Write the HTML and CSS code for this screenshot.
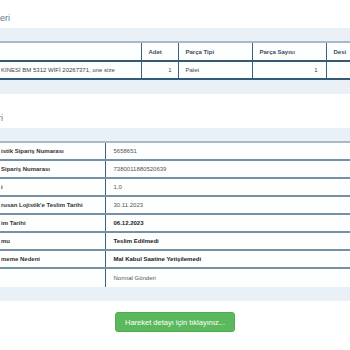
FILE: index.html
```html
<!DOCTYPE html>
<html lang="tr">
<head>
    <meta charset="UTF-8">
    <meta name="viewport" content="width=device-width, initial-scale=1.0">
    <title>Gönderi Detayı</title>
    <link rel="stylesheet" href="styles.css">
</head>
<body>
    <div class="page">
        <!-- Ürün bilgileri -->
        <div class="block first">
            <h3 class="block-title"><span>Ürün Bilgileri</span></h3>
            <div class="strip"></div>
            <table class="grid products">
                <colgroup>
                    <col style="width:141px">
                    <col style="width:37px">
                    <col style="width:74px">
                    <col style="width:74px">
                    <col style="width:44px">
                </colgroup>
                <thead>
                    <tr>
                        <th class="first-col"></th>
                        <th>Adet</th>
                        <th>Parça Tipi</th>
                        <th>Parça Sayısı</th>
                        <th>Desi</th>
                    </tr>
                </thead>
                <tbody>
                    <tr>
                        <td class="first-col">KİNESİ BM 5312 WİFİ 20267371, one size</td>
                        <td class="num">1</td>
                        <td>Palet</td>
                        <td class="num wide">1</td>
                        <td></td>
                    </tr>
                </tbody>
            </table>
            <div class="strip bottom"></div>
        </div>

        <!-- Gönderi bilgileri -->
        <div class="block second">
            <h3 class="block-title short"><span>Gönderi Bilgileri</span></h3>
            <div class="strip"></div>
            <table class="grid details">
                <colgroup>
                    <col style="width:105px">
                    <col>
                </colgroup>
                <tbody>
                    <tr><th class="first-col">istik Sipariş Numarası</th><td>5658651</td></tr>
                    <tr><th class="first-col">Sipariş Numarası</th><td>7380011880520639</td></tr>
                    <tr><th class="first-col">i</th><td>1,0</td></tr>
                    <tr><th class="first-col">rusan Lojistik'e Teslim Tarihi</th><td>30.11.2023</td></tr>
                    <tr><th class="first-col">im Tarihi</th><td class="strong">06.12.2023</td></tr>
                    <tr><th class="first-col">mu</th><td class="strong">Teslim Edilmedi</td></tr>
                    <tr><th class="first-col">meme Nedeni</th><td class="strong">Mal Kabul Saatine Yetişilemedi</td></tr>
                    <tr class="last"><th class="first-col"></th><td>Normal Gönderi</td></tr>
                </tbody>
            </table>
            <div class="strip bottom"></div>
        </div>

        <div class="actions">
            <button class="btn-green">Hareket detayı için tıklayınız...</button>
        </div>
    </div>
</body>
</html>
```

FILE: styles.css
```css
/* Base */
body {
    margin: 0;
    padding: 0;
    background: #ffffff;
    font-family: "Liberation Sans", Arial, sans-serif;
    font-size: 6px;
    color: #444;
    overflow: hidden;
}

.page {
    width: 350px;
    overflow: hidden;
}

/* Section blocks */
.block.first {
    padding-top: 12px;
}

.block.second {
    margin-top: 18px;
}

.block-title {
    margin: 0 0 4px -200px;
    width: 210px;
    height: 12px;
    line-height: 12px;
    font-size: 9px;
    font-weight: normal;
    color: #5a7892;
    text-align: right;
    white-space: nowrap;
}

.block-title.short {
    width: 203px;
}

.strip {
    height: 13px;
    background: #e9f0f6;
}

.strip.bottom {
    height: 14px;
}

/* Tables */
.grid {
    border-collapse: collapse;
    table-layout: fixed;
    background: #fdfefe;
    border-top: 2px solid #a8b8c4;
}

.grid th,
.grid td {
    padding: 0 7px;
    text-align: left;
    white-space: nowrap;
    overflow: hidden;
    border-bottom: 2px solid #7890a3;
}

.products {
    width: 370px;
}

.products th,
.products td {
    border-left: 1px solid #3f6180;
}

.products th {
    height: 17px;
    font-weight: bold;
    color: #3b4d5e;
    border-bottom: 2px solid #355a78;
}

.products td {
    height: 16px;
    color: #444;
    border-bottom: 2px solid #355a78;
}

.products .first-col {
    border-left: none;
    padding-left: 1px;
}

.products .num {
    text-align: right;
    padding-right: 6px;
}

.products .num.wide {
    padding-right: 8px;
}

.details {
    width: 360px;
}

.details th,
.details td {
    height: 16px;
}

.details th {
    font-weight: bold;
    color: #333;
    border-right: 1px solid #3f6180;
}

.details .first-col {
    padding-left: 1px;
}

.details td {
    padding-left: 8px;
    color: #555;
}

.details td.strong {
    font-weight: bold;
    color: #222;
}

.details tr.last th,
.details tr.last td {
    height: 18px;
    border-bottom: none;
}

/* Button */
.actions {
    padding-top: 11px;
    text-align: center;
}

.btn-green {
    width: 120px;
    height: 20px;
    padding: 0;
    background: #5cb85c;
    border: 1px solid #4cae4c;
    border-radius: 3px;
    color: #ffffff;
    font-family: "Liberation Sans", Arial, sans-serif;
    font-size: 7.5px;
    white-space: nowrap;
    cursor: pointer;
}

.btn-green:hover {
    background: #449d44;
}
```
